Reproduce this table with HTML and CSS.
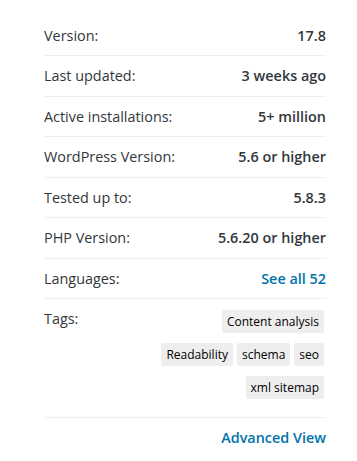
FILE: index.html
```html
<!DOCTYPE html>
<html lang="en">

<head>
    <meta charset="UTF-8">
    <meta name="viewport" content="width=device-width, initial-scale=1.0">
    <title>Plugin details</title>
    <link rel="stylesheet" href="styles.css">
</head>

<body>
    <div class="plugin-meta">
        <ul>
            <li>Version: <strong>17.8</strong></li>
            <li>Last updated: <strong>3 weeks ago</strong></li>
            <li>Active installations: <strong>5+ million</strong></li>
            <li>WordPress Version: <strong>5.6 or higher</strong></li>
            <li>Tested up to: <strong>5.8.3</strong></li>
            <li>PHP Version: <strong>5.6.20 or higher</strong></li>
            <li>Languages: <strong><a href="#">See all 52</a></strong></li>
            <li class="clear">Tags:
                <div class="tags">
                    <a href="#" rel="tag">Content analysis</a>
                    <a href="#" rel="tag">Readability</a>
                    <a href="#" rel="tag">schema</a>
                    <a href="#" rel="tag">seo</a>
                    <a href="#" rel="tag">xml sitemap</a>
                </div>
            </li>
        </ul>
        <div class="plugin-advanced">
            <a href="#">Advanced View</a>
        </div>
    </div>
</body>

</html>
```

FILE: styles.css
```css
body {
    font-family: "Open Sans", "Liberation Sans", sans-serif;
    margin: 0;
    background: #fff;
    color: #32373c;
}

a {
    color: #0073aa;
    text-decoration: none;
}

.plugin-meta {
    width: 282px;
    margin-left: 44px;
    padding-top: 15.5px;
}

.plugin-meta ul {
    list-style-type: none;
    padding: 0;
    margin: 0;
}

.plugin-meta li {
    display: flex;
    justify-content: space-between;
    padding: 9px 0;
    line-height: 21.5px;
    font-size: 14.4px;
    border-bottom: 1px solid #eee;
}

.plugin-meta li strong {
    font-weight: 600;
}

/* Tag row keeps the label at the top and wraps the tags on the right */
.plugin-meta li.clear {
    align-items: flex-start;
    padding-bottom: 18px;
}

.tags {
    display: flex;
    flex-wrap: wrap;
    justify-content: flex-end;
    gap: 10px 4px;
    width: 170px;
    margin: 2px 2px 0 0;
}

.tags a {
    display: block;
    padding: 0 5px;
    line-height: 23px;
    font-size: 12px;
    color: #000;
    background: #eee;
    border-radius: 2px;
}

.plugin-advanced {
    text-align: right;
    padding: 9px 0;
    line-height: 21.5px;
    font-size: 14.4px;
    font-weight: 600;
}
```
